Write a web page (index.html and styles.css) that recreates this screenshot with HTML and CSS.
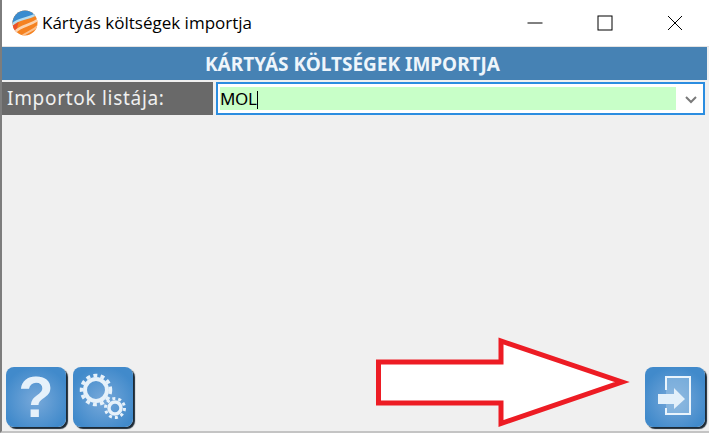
FILE: index.html
```html
<!DOCTYPE html>
<html lang="hu">

<head>
    <meta charset="UTF-8">
    <title>Kártyás költségek importja</title>
    <link rel="stylesheet" href="styles.css">
</head>

<body>
    <div class="window">
        <div class="titlebar">
            <svg class="app-icon" width="26" height="26" viewBox="0 0 26 26">
                <defs>
                    <clipPath id="ball"><circle cx="13" cy="13" r="12.500"/></clipPath>
                </defs>
                <g clip-path="url(#ball)" fill="none">
                    <rect width="26" height="26" fill="#f58220"/>
                    <path d="M0 0H26V5C20 7 12 6 0 14Z" fill="#3a8ccf"/>
                    <path d="M0 15C6 8 14 10 25 4" stroke="#b5dcef" stroke-width="2.500"/>
                    <path d="M0 26V16C3 14 5 13 7 12C5 16 4 22 6 26Z" fill="#e9522c"/>
                    <path d="M3 22C10 15 18 16 27 9" stroke="#fbd3ae" stroke-width="2.500"/>
                    <path d="M9 27C14 22 20 22 27 15" stroke="#fbc08d" stroke-width="2"/>
                </g>
            </svg>
            <span class="title-text">Kártyás költségek importja</span>
            <div class="win-buttons">
                <svg width="16" height="16" viewBox="0 0 16 16"><path d="M0.500 8H15.500" stroke="#000" fill="none"/></svg>
                <svg width="16" height="16" viewBox="0 0 16 16"><rect x="1" y="1" width="14" height="14" stroke="#000" fill="none"/></svg>
                <svg width="16" height="16" viewBox="0 0 16 16"><path d="M1 1L15 15M15 1L1 15" stroke="#000" fill="none"/></svg>
            </div>
        </div>

        <div class="content">
            <div class="page-header">KÁRTYÁS KÖLTSÉGEK IMPORTJA</div>
            <div class="form-row">
                <label class="form-label">Importok listája:</label>
                <div class="combo">
                    <div class="combo-value">MOL<span class="caret"></span></div>
                    <svg class="combo-arrow" width="12" height="8" viewBox="0 0 12 8"><path d="M1 1L6 6L11 1" stroke="#7a7a7a" stroke-width="2" fill="none"/></svg>
                </div>
            </div>

            <div class="toolbar">
                <div class="tool-btn">
                    <span class="help-mark">?</span>
                </div>
                <div class="tool-btn">
                    <svg width="60" height="60" viewBox="0 0 60 60">
                        <g fill="none" stroke="#e6f1fa">
                            <circle cx="23" cy="23" r="11" stroke-width="4"/>
                            <circle cx="23" cy="23" r="14.500" stroke-width="3.500" stroke-dasharray="4 3.250"/>
                            <circle cx="42" cy="41" r="6" stroke-width="3.500"/>
                            <circle cx="42" cy="41" r="9.500" stroke-width="3" stroke-dasharray="3 2.970"/>
                        </g>
                    </svg>
                </div>
                <div class="tool-btn exit-btn">
                    <svg width="60" height="60" viewBox="0 0 60 60">
                        <path d="M21 23V10H45V47H21V41" fill="#a9cbe8" fill-opacity="0.45" stroke="#eaf4fc" stroke-width="2"/>
                        <path d="M13 27H29V21L40 32L29 42V37H13Z" fill="#e3f0fa"/>
                    </svg>
                </div>
            </div>
        </div>
    </div>

    <svg class="annotation" width="709" height="433" viewBox="0 0 709 433">
        <polygon points="378.500,362 501,362 501,341 622,382 501,423.500 501,403 378.500,403" fill="#fff" stroke="#ed1c24" stroke-width="5"/>
    </svg>
</body>

</html>
```

FILE: styles.css
```css
html, body {
    margin: 0;
    padding: 0;
    height: 100%;
    overflow: hidden;
}

body {
    font-family: "Noto Sans", Arial, sans-serif;
    position: relative;
}

.window {
    height: 433px;
    box-sizing: border-box;
    display: flex;
    flex-direction: column;
    border-left: 2px solid #7d7d7d;
    border-bottom: 2px solid #c4c4c4;
    background: #f0f0f0;
}

.titlebar {
    height: 47px;
    box-sizing: border-box;
    flex: none;
    background: #fff;
    display: flex;
    align-items: center;
    padding: 0 0 0 10px;
    border-bottom: 1px solid #e3e3e3;
}

.app-icon {
    margin-right: 4px;
    margin-top: -1px;
}

.title-text {
    font-family: "Open Sans", "Noto Sans", sans-serif;
    font-size: 17px;
    color: #000;
    margin-top: -1px;
}

.win-buttons {
    margin-left: auto;
    display: flex;
    gap: 54px;
    padding-right: 26px;
    margin-top: -1px;
}

.win-buttons svg {
    display: block;
}

.content {
    flex: 1;
    display: flex;
    flex-direction: column;
    padding-right: 2px;
}

.page-header {
    height: 33px;
    background: #4682b4;
    color: #eef5fb;
    font-weight: bold;
    font-size: 19px;
    line-height: 34px;
    text-align: center;
    margin-bottom: 2px;
    padding-right: 4px;
}

.form-row {
    display: flex;
    gap: 3px;
    height: 33px;
}

.form-label {
    width: 211px;
    background: #696969;
    color: #f0f0f0;
    font-size: 19px;
    letter-spacing: 0.700px;
    line-height: 33px;
    padding-left: 5px;
    box-sizing: border-box;
}

.combo {
    flex: 1;
    display: flex;
    align-items: center;
    background: #fff;
    border: 2px solid #2b8de0;
    box-sizing: border-box;
    margin-right: 2px;
    padding: 3px 2px 3px 2px;
}

.combo-value {
    flex: 1;
    height: 23px;
    line-height: 23px;
    background: #c8ffc8;
    color: #000;
    font-size: 17px;
    letter-spacing: -0.300px;
    margin-right: 25px;
}

.caret {
    display: inline-block;
    width: 1px;
    height: 18px;
    background: #000;
    vertical-align: -4px;
}

.combo-arrow {
    position: absolute;
    right: 12px;
    top: 96px;
}

.toolbar {
    margin-top: auto;
    display: flex;
    gap: 7px;
    padding: 0 0 0 4px;
    height: 64px;
}

.tool-btn {
    width: 60px;
    height: 60px;
    border-radius: 8px;
    background: radial-gradient(circle at 50% 55%, #78a9da, #418acb 75%);
    box-shadow: 2px 2px 1px #1c2a36;
    display: flex;
    align-items: center;
    justify-content: center;
}

.exit-btn {
    margin-left: auto;
    margin-right: 2px;
}

.help-mark {
    color: #e6f1fa;
    font-family: "Liberation Sans", Arial, sans-serif;
    font-weight: bold;
    font-size: 58px;
    line-height: 60px;
}

.annotation {
    position: absolute;
    left: 0;
    top: 0;
}
```
